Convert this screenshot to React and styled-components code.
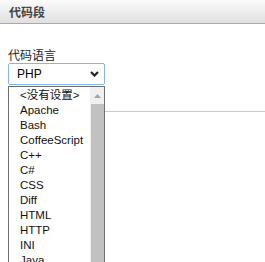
import styled, { createGlobalStyle } from "styled-components";

const GlobalStyle = createGlobalStyle`
  html, body {
    margin: 0;
    padding: 0;
    background: #fff;
    overflow: hidden;
  }
  body {
    font-family: "Liberation Sans", Arial, "Noto Sans CJK SC", sans-serif;
  }
`;

const Dialog = styled.div`
  width: 265px;
  height: 262px;
  display: flex;
  flex-direction: column;
  background: #fff;
  overflow: hidden;
`;

const TitleBar = styled.div`
  flex-shrink: 0;
  height: 23px;
  display: flex;
  align-items: center;
  padding: 0 9px;
  background: linear-gradient(to bottom, #fbfbfb, #e0e0e0);
  border-bottom: 1px solid #a9a9a9;
  font-size: 12px;
  font-weight: bold;
  color: #444;
  font-family: "Noto Sans CJK SC", sans-serif;
`;

const Body = styled.div`
  position: relative;
  flex: 1;
  min-height: 0;
  padding: 23px 0 0 8px;
`;

const Label = styled.div`
  font-family: "Noto Sans CJK SC", sans-serif;
  font-size: 12px;
  line-height: 15px;
  color: #222;
  margin-bottom: 1px;
`;

const Select = styled.div`
  width: 97px;
  height: 22px;
  box-sizing: border-box;
  border: 1px solid #82b6ec;
  border-radius: 2px;
  display: flex;
  align-items: center;
  justify-content: space-between;
  padding: 0 5px 0 8px;
  font-size: 12px;
  color: #000;
`;

const CodeArea = styled.div`
  margin-top: 26px;
  height: 160px;
  border-top: 1px solid #cbcbcb;
`;

const List = styled.div`
  position: absolute;
  left: 8px;
  top: 62px;
  width: 97px;
  height: 200px;
  box-sizing: border-box;
  border: 1px solid #6f6f6f;
  background: #fff;
  display: flex;
`;

const Items = styled.div`
  flex: 1;
  padding-top: 1px;
`;

const Item = styled.div`
  font-size: 11.5px;
  line-height: 15px;
  padding-left: 11px;
  color: #111;
  white-space: nowrap;
`;

const ScrollTrack = styled.div`
  width: 14px;
  background: #f0f0f0;
  display: flex;
  flex-direction: column;
  align-items: center;
`;

const ArrowUp = styled.div`
  height: 17px;
  display: flex;
  align-items: center;
  justify-content: center;
`;

const Thumb = styled.div`
  width: 13px;
  flex: 1;
  background: #c1c1c1;
`;

const languages = [
  "<没有设置>",
  "Apache",
  "Bash",
  "CoffeeScript",
  "C++",
  "C#",
  "CSS",
  "Diff",
  "HTML",
  "HTTP",
  "INI",
  "Java",
];

export default function App() {
  return (
    <>
      <GlobalStyle />
      <Dialog>
        <TitleBar>代码段</TitleBar>
        <Body>
          <Label>代码语言</Label>
          <Select>
            PHP
            <svg width="9" height="6" viewBox="0 0 9 6">
              <path d="M1 1 L4.5 4.5 L8 1" stroke="#222" strokeWidth="2.2" fill="none" />
            </svg>
          </Select>
          <CodeArea />
          <List>
            <Items>
              {languages.map((l) => (
                <Item key={l}>{l}</Item>
              ))}
            </Items>
            <ScrollTrack>
              <ArrowUp>
                <svg width="7" height="4" viewBox="0 0 7 4">
                  <path d="M0 4 L3.5 0 L7 4 Z" fill="#a3a3a3" />
                </svg>
              </ArrowUp>
              <Thumb />
            </ScrollTrack>
          </List>
        </Body>
      </Dialog>
    </>
  );
}
